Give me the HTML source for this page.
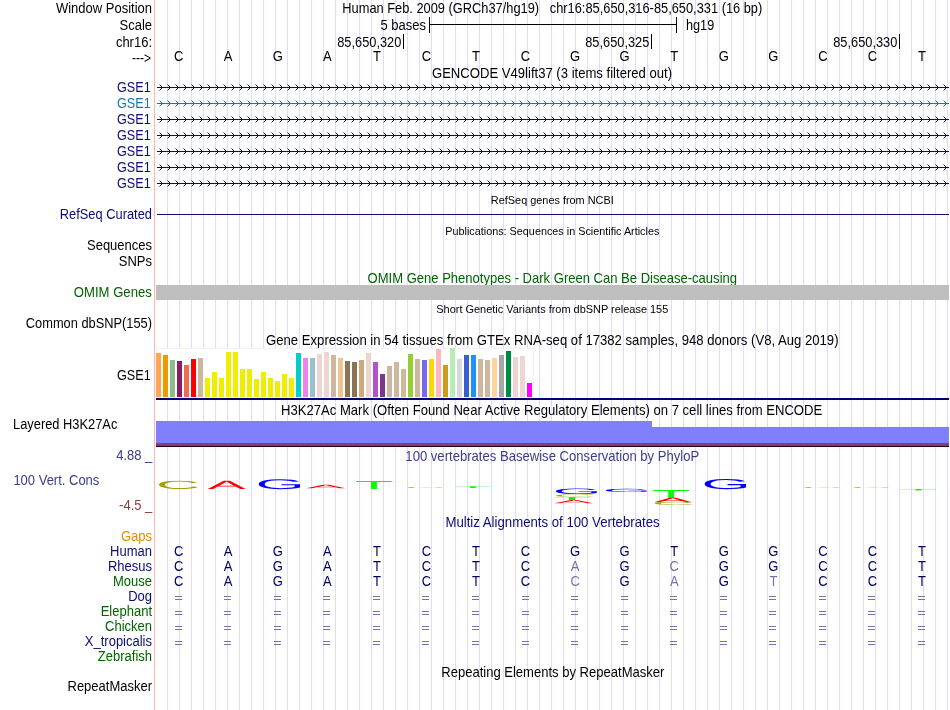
<!DOCTYPE html>
<html><head><meta charset="utf-8"><title>UCSC Genome Browser</title>
<style>
html,body{margin:0;padding:0;background:#fff;}
body{width:950px;height:710px;overflow:hidden;font-family:"Liberation Sans",sans-serif;}
svg{display:block;position:absolute;left:0;top:0;will-change:transform;}
svg text{font-family:"Liberation Sans",sans-serif;}
</style></head><body>
<svg width="950" height="710" viewBox="0 0 950 710">
<rect width="950" height="710" fill="#fff"/>
<path d="M167.5 0V710 M179.5 0V710 M191.5 0V710 M203.5 0V710 M215.5 0V710 M227.5 0V710 M239.5 0V710 M251.5 0V710 M263.5 0V710 M275.5 0V710 M287.5 0V710 M299.5 0V710 M311.5 0V710 M323.5 0V710 M335.5 0V710 M347.5 0V710 M359.5 0V710 M371.5 0V710 M383.5 0V710 M395.5 0V710 M407.5 0V710 M419.5 0V710 M431.5 0V710 M443.5 0V710 M455.5 0V710 M467.5 0V710 M479.5 0V710 M491.5 0V710 M503.5 0V710 M515.5 0V710 M527.5 0V710 M539.5 0V710 M551.5 0V710 M563.5 0V710 M575.5 0V710 M587.5 0V710 M599.5 0V710 M611.5 0V710 M623.5 0V710 M635.5 0V710 M647.5 0V710 M659.5 0V710 M671.5 0V710 M683.5 0V710 M695.5 0V710 M707.5 0V710 M719.5 0V710 M731.5 0V710 M743.5 0V710 M755.5 0V710 M767.5 0V710 M779.5 0V710 M791.5 0V710 M803.5 0V710 M815.5 0V710 M827.5 0V710 M839.5 0V710 M851.5 0V710 M863.5 0V710 M875.5 0V710 M887.5 0V710 M899.5 0V710 M911.5 0V710 M923.5 0V710 M935.5 0V710 M947.5 0V710" stroke="#dcdcff" stroke-width="1" fill="none"/>
<rect x="154" y="0" width="1" height="710" fill="#ffb4b4"/>
<text transform="translate(152,12.6) scale(1.0,1.07)" font-size="13" text-anchor="end" fill="#000" >Window Position</text>
<text transform="translate(552.3,12.6) scale(0.987,1.07)" font-size="13" text-anchor="middle" fill="#000" >Human Feb. 2009 (GRCh37/hg19)&#160;&#160;&#160;chr16:85,650,316-85,650,331 (16 bp)</text>
<text transform="translate(152,29.6) scale(1.0,1.07)" font-size="13" text-anchor="end" fill="#000" >Scale</text>
<text transform="translate(426,29.6) scale(1.0,1.07)" font-size="13" text-anchor="end" fill="#000" >5 bases</text>
<path d="M429.5 17V33M676.5 17V33M429 24.5H677" stroke="#000" stroke-width="1" fill="none"/>
<text transform="translate(686,29.6) scale(0.975,1.07)" font-size="13" text-anchor="start" fill="#000" >hg19</text>
<text transform="translate(152,46.6) scale(1.0,1.07)" font-size="13" text-anchor="end" fill="#000" >chr16:</text>
<text transform="translate(401.3,46.6) scale(0.985,1.07)" font-size="13" text-anchor="end" fill="#000" >85,650,320</text>
<rect x="403" y="34" width="1" height="15" fill="#000"/>
<text transform="translate(649.3,46.6) scale(0.985,1.07)" font-size="13" text-anchor="end" fill="#000" >85,650,325</text>
<rect x="651" y="34" width="1" height="15" fill="#000"/>
<text transform="translate(897.3,46.6) scale(0.985,1.07)" font-size="13" text-anchor="end" fill="#000" >85,650,330</text>
<rect x="899" y="34" width="1" height="15" fill="#000"/>
<text transform="translate(151,62.8) scale(0.93,1.07)" font-size="13" text-anchor="end" fill="#000" >---&gt;</text>
<text transform="translate(178.6,60.6) scale(1.0,1.07)" font-size="13" text-anchor="middle" fill="#000" >C</text>
<text transform="translate(228.16,60.6) scale(1.0,1.07)" font-size="13" text-anchor="middle" fill="#000" >A</text>
<text transform="translate(277.73,60.6) scale(1.0,1.07)" font-size="13" text-anchor="middle" fill="#000" >G</text>
<text transform="translate(327.29,60.6) scale(1.0,1.07)" font-size="13" text-anchor="middle" fill="#000" >A</text>
<text transform="translate(376.85,60.6) scale(1.0,1.07)" font-size="13" text-anchor="middle" fill="#000" >T</text>
<text transform="translate(426.41,60.6) scale(1.0,1.07)" font-size="13" text-anchor="middle" fill="#000" >C</text>
<text transform="translate(475.98,60.6) scale(1.0,1.07)" font-size="13" text-anchor="middle" fill="#000" >T</text>
<text transform="translate(525.54,60.6) scale(1.0,1.07)" font-size="13" text-anchor="middle" fill="#000" >C</text>
<text transform="translate(575.1,60.6) scale(1.0,1.07)" font-size="13" text-anchor="middle" fill="#000" >G</text>
<text transform="translate(624.66,60.6) scale(1.0,1.07)" font-size="13" text-anchor="middle" fill="#000" >G</text>
<text transform="translate(674.23,60.6) scale(1.0,1.07)" font-size="13" text-anchor="middle" fill="#000" >T</text>
<text transform="translate(723.79,60.6) scale(1.0,1.07)" font-size="13" text-anchor="middle" fill="#000" >G</text>
<text transform="translate(773.35,60.6) scale(1.0,1.07)" font-size="13" text-anchor="middle" fill="#000" >G</text>
<text transform="translate(822.91,60.6) scale(1.0,1.07)" font-size="13" text-anchor="middle" fill="#000" >C</text>
<text transform="translate(872.48,60.6) scale(1.0,1.07)" font-size="13" text-anchor="middle" fill="#000" >C</text>
<text transform="translate(922.04,60.6) scale(1.0,1.07)" font-size="13" text-anchor="middle" fill="#000" >T</text>
<text transform="translate(552.0,77.6) scale(1.008,1.07)" font-size="13" text-anchor="middle" fill="#000" >GENCODE V49lift37 (3 items filtered out)</text>
<defs><pattern id="cvn" patternUnits="userSpaceOnUse" x="154" y="84" width="8" height="16"><rect x="5" y="0" width="1" height="1" fill="#0c0c78" fill-opacity="0.45"/><rect x="6" y="1" width="1" height="1" fill="#0c0c78" fill-opacity="1"/><rect x="7" y="2" width="1" height="1" fill="#0c0c78" fill-opacity="1"/><rect x="7" y="4" width="1" height="1" fill="#0c0c78" fill-opacity="1"/><rect x="6" y="5" width="1" height="1" fill="#0c0c78" fill-opacity="1"/><rect x="5" y="6" width="1" height="1" fill="#0c0c78" fill-opacity="0.45"/></pattern></defs>
<defs><pattern id="cvt" patternUnits="userSpaceOnUse" x="154" y="84" width="8" height="16"><rect x="5" y="0" width="1" height="1" fill="#1878ac" fill-opacity="0.45"/><rect x="6" y="1" width="1" height="1" fill="#1878ac" fill-opacity="1"/><rect x="7" y="2" width="1" height="1" fill="#1878ac" fill-opacity="1"/><rect x="7" y="4" width="1" height="1" fill="#1878ac" fill-opacity="1"/><rect x="6" y="5" width="1" height="1" fill="#1878ac" fill-opacity="1"/><rect x="5" y="6" width="1" height="1" fill="#1878ac" fill-opacity="0.45"/></pattern></defs>
<text transform="translate(150.8,91.6) scale(0.975,1.07)" font-size="13" text-anchor="end" fill="#0c0c78" >GSE1</text>
<rect x="157" y="87" width="792" height="1" fill="#0c0c78"/>
<rect x="157" y="84" width="792" height="7" fill="url(#cvn)"/>
<text transform="translate(150.8,107.6) scale(0.975,1.07)" font-size="13" text-anchor="end" fill="#1878ac" >GSE1</text>
<rect x="157" y="103" width="792" height="1" fill="#1878ac"/>
<rect x="157" y="100" width="792" height="7" fill="url(#cvt)"/>
<text transform="translate(150.8,123.6) scale(0.975,1.07)" font-size="13" text-anchor="end" fill="#0c0c78" >GSE1</text>
<rect x="157" y="119" width="792" height="1" fill="#0c0c78"/>
<rect x="157" y="116" width="792" height="7" fill="url(#cvn)"/>
<text transform="translate(150.8,139.6) scale(0.975,1.07)" font-size="13" text-anchor="end" fill="#0c0c78" >GSE1</text>
<rect x="157" y="135" width="792" height="1" fill="#0c0c78"/>
<rect x="157" y="132" width="792" height="7" fill="url(#cvn)"/>
<text transform="translate(150.8,155.6) scale(0.975,1.07)" font-size="13" text-anchor="end" fill="#0c0c78" >GSE1</text>
<rect x="157" y="151" width="792" height="1" fill="#0c0c78"/>
<rect x="157" y="148" width="792" height="7" fill="url(#cvn)"/>
<text transform="translate(150.8,171.6) scale(0.975,1.07)" font-size="13" text-anchor="end" fill="#0c0c78" >GSE1</text>
<rect x="157" y="167" width="792" height="1" fill="#0c0c78"/>
<rect x="157" y="164" width="792" height="7" fill="url(#cvn)"/>
<text transform="translate(150.8,187.6) scale(0.975,1.07)" font-size="13" text-anchor="end" fill="#0c0c78" >GSE1</text>
<rect x="157" y="183" width="792" height="1" fill="#0c0c78"/>
<rect x="157" y="180" width="792" height="7" fill="url(#cvn)"/>
<text transform="translate(552.3,204.0) scale(0.992,1.07)" font-size="11" text-anchor="middle" fill="#000" >RefSeq genes from NCBI</text>
<text transform="translate(152,218.9) scale(0.99,1.07)" font-size="13" text-anchor="end" fill="#0c0c78" >RefSeq Curated</text>
<rect x="157" y="214" width="792" height="1" fill="#0c0c78"/>
<text transform="translate(552.3,235.0) scale(0.985,1.07)" font-size="11" text-anchor="middle" fill="#000" >Publications: Sequences in Scientific Articles</text>
<text transform="translate(152,249.6) scale(1.0,1.07)" font-size="13" text-anchor="end" fill="#000" >Sequences</text>
<text transform="translate(152,265.6) scale(1.0,1.07)" font-size="13" text-anchor="end" fill="#000" >SNPs</text>
<text transform="translate(552.3,282.6) scale(1.004,1.07)" font-size="13" text-anchor="middle" fill="#006400" >OMIM Gene Phenotypes - Dark Green Can Be Disease-causing</text>
<text transform="translate(151.8,296.6) scale(1.01,1.07)" font-size="13" text-anchor="end" fill="#006400" >OMIM Genes</text>
<rect x="156" y="285" width="793" height="15" fill="#bebebe"/>
<text transform="translate(552.3,313.0) scale(0.996,1.07)" font-size="11" text-anchor="middle" fill="#000" >Short Genetic Variants from dbSNP release 155</text>
<text transform="translate(152,327.6) scale(0.987,1.07)" font-size="13" text-anchor="end" fill="#000" >Common dbSNP(155)</text>
<text transform="translate(552.3,344.6) scale(1.01,1.07)" font-size="13" text-anchor="middle" fill="#000" >Gene Expression in 54 tissues from GTEx RNA-seq of 17382 samples, 948 donors (V8, Aug 2019)</text>
<text transform="translate(150.8,379.6) scale(0.975,1.07)" font-size="13" text-anchor="end" fill="#000" >GSE1</text>
<rect x="156" y="348" width="378" height="50" fill="#fff"/>
<rect x="156.5" y="348.5" width="377" height="49" fill="none" stroke="#f2f2f2"/>
<rect x="156" y="353" width="5" height="44" fill="#FFA54F"/>
<rect x="163" y="355" width="5" height="42" fill="#EE9A00"/>
<rect x="170" y="360" width="5" height="37" fill="#8FBC8F"/>
<rect x="177" y="361" width="5" height="36" fill="#8B1C62"/>
<rect x="184" y="365" width="5" height="32" fill="#EE6A50"/>
<rect x="191" y="359" width="5" height="38" fill="#FF0000"/>
<rect x="198" y="358" width="5" height="39" fill="#CDB79E"/>
<rect x="205" y="378" width="5" height="19" fill="#EEEE00"/>
<rect x="212" y="372" width="5" height="25" fill="#EEEE00"/>
<rect x="219" y="378" width="5" height="19" fill="#EEEE00"/>
<rect x="226" y="352" width="5" height="45" fill="#EEEE00"/>
<rect x="233" y="352" width="5" height="45" fill="#EEEE00"/>
<rect x="240" y="369" width="5" height="28" fill="#EEEE00"/>
<rect x="247" y="369" width="5" height="28" fill="#EEEE00"/>
<rect x="254" y="379" width="5" height="18" fill="#EEEE00"/>
<rect x="261" y="372" width="5" height="25" fill="#EEEE00"/>
<rect x="268" y="378" width="5" height="19" fill="#EEEE00"/>
<rect x="275" y="381" width="5" height="16" fill="#EEEE00"/>
<rect x="282" y="374" width="5" height="23" fill="#EEEE00"/>
<rect x="289" y="378" width="5" height="19" fill="#EEEE00"/>
<rect x="296" y="353" width="5" height="44" fill="#00CDCD"/>
<rect x="303" y="358" width="5" height="39" fill="#EE82EE"/>
<rect x="310" y="358" width="5" height="39" fill="#9AC0CD"/>
<rect x="317" y="354" width="5" height="43" fill="#EED5D2"/>
<rect x="324" y="352" width="5" height="45" fill="#EED5D2"/>
<rect x="331" y="355" width="5" height="42" fill="#CDB79E"/>
<rect x="338" y="358" width="5" height="39" fill="#EEC591"/>
<rect x="345" y="361" width="5" height="36" fill="#8B7355"/>
<rect x="352" y="362" width="5" height="35" fill="#8B7355"/>
<rect x="359" y="360" width="5" height="37" fill="#CDAA7D"/>
<rect x="366" y="353" width="5" height="44" fill="#EED5D2"/>
<rect x="373" y="362" width="5" height="35" fill="#B452CD"/>
<rect x="380" y="374" width="5" height="23" fill="#7A378B"/>
<rect x="387" y="366" width="5" height="31" fill="#CDB79E"/>
<rect x="394" y="362" width="5" height="35" fill="#CDB79E"/>
<rect x="401" y="369" width="5" height="28" fill="#CDB79E"/>
<rect x="408" y="354" width="5" height="43" fill="#9ACD32"/>
<rect x="415" y="359" width="5" height="38" fill="#CDB79E"/>
<rect x="422" y="360" width="5" height="37" fill="#7A67EE"/>
<rect x="429" y="359" width="5" height="38" fill="#FFD700"/>
<rect x="436" y="349" width="5" height="48" fill="#FFB6C1"/>
<rect x="443" y="365" width="5" height="32" fill="#CD9B1D"/>
<rect x="450" y="348" width="5" height="49" fill="#B4EEB4"/>
<rect x="457" y="359" width="5" height="38" fill="#D9D9D9"/>
<rect x="464" y="355" width="5" height="42" fill="#3A5FCD"/>
<rect x="471" y="355" width="5" height="42" fill="#1E90FF"/>
<rect x="478" y="359" width="5" height="38" fill="#CDB79E"/>
<rect x="485" y="360" width="5" height="37" fill="#CDB79E"/>
<rect x="492" y="358" width="5" height="39" fill="#FFD39B"/>
<rect x="499" y="355" width="5" height="42" fill="#A6A6A6"/>
<rect x="506" y="351" width="5" height="46" fill="#008B45"/>
<rect x="513" y="357" width="5" height="40" fill="#EED5D2"/>
<rect x="520" y="356" width="5" height="41" fill="#EED5D2"/>
<rect x="527" y="383" width="5" height="14" fill="#FF00FF"/>
<rect x="156" y="398" width="793" height="2" fill="#000070"/>
<text transform="translate(551.5999999999999,414.6) scale(1.0075,1.07)" font-size="13" text-anchor="middle" fill="#000" >H3K27Ac Mark (Often Found Near Active Regulatory Elements) on 7 cell lines from ENCODE</text>
<text transform="translate(13,428.6) scale(0.99,1.07)" font-size="13" text-anchor="start" fill="#000" >Layered H3K27Ac</text>
<path d="M156 421H652V427H949V443H156Z" fill="#8080ff"/>
<rect x="156" y="443" width="793" height="2" fill="#804080"/>
<rect x="156" y="445" width="793" height="1" fill="#8c3850"/>
<rect x="156" y="446" width="793" height="1" fill="#280018"/>
<text transform="translate(552.3,460.6) scale(1.0075,1.07)" font-size="13" text-anchor="middle" fill="#3c3c8c" >100 vertebrates Basewise Conservation by PhyloP</text>
<text transform="translate(152.3,459.6) scale(1.0,1.07)" font-size="13" text-anchor="end" fill="#3c3c8c" >4.88 _</text>
<text transform="translate(13.4,484.6) scale(1.0,1.07)" font-size="13" text-anchor="start" fill="#3c3c8c" >100 Vert. Cons</text>
<text transform="translate(152.3,509.7) scale(1.0,1.07)" font-size="13" text-anchor="end" fill="#8c3c3c" >-4.5 _</text>
<defs><path id="lgA" d="M1167 0 1006 412H364L202 0H4L579 1409H796L1362 0ZM685 1265 676 1237Q651 1154 602 1024L422 561H949L768 1026Q740 1095 712 1182Z"/><path id="lgC" d="M792 1274Q558 1274 428.0 1123.5Q298 973 298 711Q298 452 433.5 294.5Q569 137 800 137Q1096 137 1245 430L1401 352Q1314 170 1156.5 75.0Q999 -20 791 -20Q578 -20 422.5 68.5Q267 157 185.5 321.5Q104 486 104 711Q104 1048 286.0 1239.0Q468 1430 790 1430Q1015 1430 1166.0 1342.0Q1317 1254 1388 1081L1207 1021Q1158 1144 1049.5 1209.0Q941 1274 792 1274Z"/><path id="lgG" d="M103 711Q103 1054 287.0 1242.0Q471 1430 804 1430Q1038 1430 1184.0 1351.0Q1330 1272 1409 1098L1227 1044Q1167 1164 1061.5 1219.0Q956 1274 799 1274Q555 1274 426.0 1126.5Q297 979 297 711Q297 444 434.0 289.5Q571 135 813 135Q951 135 1070.5 177.0Q1190 219 1264 291V545H843V705H1440V219Q1328 105 1165.5 42.5Q1003 -20 813 -20Q592 -20 432.0 68.0Q272 156 187.5 321.5Q103 487 103 711Z"/><path id="lgT" d="M720 1253V0H530V1253H46V1409H1204V1253Z"/></defs>
<use href="#lgC" transform="matrix(0.03007,0,0,-0.00572,155.87,488.89)" fill="#a0a000" fill-opacity="1"/>
<use href="#lgA" transform="matrix(0.02791,0,0,-0.00589,207.59,489.00)" fill="#ff0000" fill-opacity="1"/>
<use href="#lgG" transform="matrix(0.03089,0,0,-0.00690,255.52,489.06)" fill="#0000ff" fill-opacity="1"/>
<use href="#lgA" transform="matrix(0.02872,0,0,-0.00256,306.19,488.30)" fill="#ff0000" fill-opacity="1"/>
<use href="#lgT" transform="matrix(0.03057,0,0,-0.00568,354.89,489.00)" fill="#00ff00" fill-opacity="1"/>
<use href="#lgC" transform="matrix(0.02830,0,0,-0.00069,404.36,487.89)" fill="#a0a000" fill-opacity="1"/>
<use href="#lgT" transform="matrix(0.03048,0,0,-0.00128,453.90,488.10)" fill="#00ff00" fill-opacity="1"/>
<use href="#lgG" transform="matrix(0.03067,0,0,-0.00379,552.64,493.92)" fill="#0000ff" fill-opacity="1"/>
<use href="#lgC" transform="matrix(0.02968,0,0,-0.00186,552.91,496.96)" fill="#a0a000" fill-opacity="1"/>
<use href="#lgT" transform="matrix(0.03109,0,0,-0.00213,552.57,500.00)" fill="#00ff00" fill-opacity="1"/>
<use href="#lgA" transform="matrix(0.02835,0,0,-0.00227,554.39,503.20)" fill="#ff0000" fill-opacity="1"/>
<use href="#lgG" transform="matrix(0.03067,0,0,-0.00221,602.64,491.96)" fill="#0000ff" fill-opacity="1"/>
<use href="#lgT" transform="matrix(0.03092,0,0,-0.00568,651.78,498.00)" fill="#00ff00" fill-opacity="1"/>
<use href="#lgA" transform="matrix(0.02791,0,0,-0.00312,653.69,502.20)" fill="#ff0000" fill-opacity="1"/>
<use href="#lgC" transform="matrix(0.02930,0,0,-0.00221,651.95,504.96)" fill="#a0a000" fill-opacity="1"/>
<use href="#lgG" transform="matrix(0.03096,0,0,-0.00703,701.41,489.06)" fill="#0000ff" fill-opacity="1"/>
<use href="#lgC" transform="matrix(0.02830,0,0,-0.00069,801.36,487.89)" fill="#a0a000" fill-opacity="1"/>
<use href="#lgC" transform="matrix(0.02814,0,0,-0.00069,850.57,487.89)" fill="#a0a000" fill-opacity="1"/>
<use href="#lgT" transform="matrix(0.03126,0,0,-0.00106,898.96,490.50)" fill="#00ff00" fill-opacity="1"/>
<text transform="translate(552.5,526.6) scale(1.017,1.07)" font-size="13" text-anchor="middle" fill="#0c0c78" >Multiz Alignments of 100 Vertebrates</text>
<text transform="translate(152,540.6) scale(1.0,1.07)" font-size="13" text-anchor="end" fill="#e88b00" >Gaps</text>
<text transform="translate(152,555.6) scale(1.0,1.07)" font-size="13" text-anchor="end" fill="#0c0c78" >Human</text>
<text transform="translate(178.6,555.6) scale(1.0,1.07)" font-size="13" text-anchor="middle" fill="#000064" >C</text>
<text transform="translate(228.16,555.6) scale(1.0,1.07)" font-size="13" text-anchor="middle" fill="#000064" >A</text>
<text transform="translate(277.73,555.6) scale(1.0,1.07)" font-size="13" text-anchor="middle" fill="#000064" >G</text>
<text transform="translate(327.29,555.6) scale(1.0,1.07)" font-size="13" text-anchor="middle" fill="#000064" >A</text>
<text transform="translate(376.85,555.6) scale(1.0,1.07)" font-size="13" text-anchor="middle" fill="#000064" >T</text>
<text transform="translate(426.41,555.6) scale(1.0,1.07)" font-size="13" text-anchor="middle" fill="#000064" >C</text>
<text transform="translate(475.98,555.6) scale(1.0,1.07)" font-size="13" text-anchor="middle" fill="#000064" >T</text>
<text transform="translate(525.54,555.6) scale(1.0,1.07)" font-size="13" text-anchor="middle" fill="#000064" >C</text>
<text transform="translate(575.1,555.6) scale(1.0,1.07)" font-size="13" text-anchor="middle" fill="#000064" >G</text>
<text transform="translate(624.66,555.6) scale(1.0,1.07)" font-size="13" text-anchor="middle" fill="#000064" >G</text>
<text transform="translate(674.23,555.6) scale(1.0,1.07)" font-size="13" text-anchor="middle" fill="#000064" >T</text>
<text transform="translate(723.79,555.6) scale(1.0,1.07)" font-size="13" text-anchor="middle" fill="#000064" >G</text>
<text transform="translate(773.35,555.6) scale(1.0,1.07)" font-size="13" text-anchor="middle" fill="#000064" >G</text>
<text transform="translate(822.91,555.6) scale(1.0,1.07)" font-size="13" text-anchor="middle" fill="#000064" >C</text>
<text transform="translate(872.48,555.6) scale(1.0,1.07)" font-size="13" text-anchor="middle" fill="#000064" >C</text>
<text transform="translate(922.04,555.6) scale(1.0,1.07)" font-size="13" text-anchor="middle" fill="#000064" >T</text>
<text transform="translate(152,570.6) scale(1.0,1.07)" font-size="13" text-anchor="end" fill="#0c0c78" >Rhesus</text>
<text transform="translate(178.6,570.6) scale(1.0,1.07)" font-size="13" text-anchor="middle" fill="#000064" >C</text>
<text transform="translate(228.16,570.6) scale(1.0,1.07)" font-size="13" text-anchor="middle" fill="#000064" >A</text>
<text transform="translate(277.73,570.6) scale(1.0,1.07)" font-size="13" text-anchor="middle" fill="#000064" >G</text>
<text transform="translate(327.29,570.6) scale(1.0,1.07)" font-size="13" text-anchor="middle" fill="#000064" >A</text>
<text transform="translate(376.85,570.6) scale(1.0,1.07)" font-size="13" text-anchor="middle" fill="#000064" >T</text>
<text transform="translate(426.41,570.6) scale(1.0,1.07)" font-size="13" text-anchor="middle" fill="#000064" >C</text>
<text transform="translate(475.98,570.6) scale(1.0,1.07)" font-size="13" text-anchor="middle" fill="#000064" >T</text>
<text transform="translate(525.54,570.6) scale(1.0,1.07)" font-size="13" text-anchor="middle" fill="#000064" >C</text>
<text transform="translate(575.1,570.6) scale(1.0,1.07)" font-size="13" text-anchor="middle" fill="#7474aa" >A</text>
<text transform="translate(624.66,570.6) scale(1.0,1.07)" font-size="13" text-anchor="middle" fill="#000064" >G</text>
<text transform="translate(674.23,570.6) scale(1.0,1.07)" font-size="13" text-anchor="middle" fill="#7474aa" >C</text>
<text transform="translate(723.79,570.6) scale(1.0,1.07)" font-size="13" text-anchor="middle" fill="#000064" >G</text>
<text transform="translate(773.35,570.6) scale(1.0,1.07)" font-size="13" text-anchor="middle" fill="#000064" >G</text>
<text transform="translate(822.91,570.6) scale(1.0,1.07)" font-size="13" text-anchor="middle" fill="#000064" >C</text>
<text transform="translate(872.48,570.6) scale(1.0,1.07)" font-size="13" text-anchor="middle" fill="#000064" >C</text>
<text transform="translate(922.04,570.6) scale(1.0,1.07)" font-size="13" text-anchor="middle" fill="#000064" >T</text>
<text transform="translate(152,585.6) scale(1.0,1.07)" font-size="13" text-anchor="end" fill="#006400" >Mouse</text>
<text transform="translate(178.6,585.6) scale(1.0,1.07)" font-size="13" text-anchor="middle" fill="#000064" >C</text>
<text transform="translate(228.16,585.6) scale(1.0,1.07)" font-size="13" text-anchor="middle" fill="#000064" >A</text>
<text transform="translate(277.73,585.6) scale(1.0,1.07)" font-size="13" text-anchor="middle" fill="#000064" >G</text>
<text transform="translate(327.29,585.6) scale(1.0,1.07)" font-size="13" text-anchor="middle" fill="#000064" >A</text>
<text transform="translate(376.85,585.6) scale(1.0,1.07)" font-size="13" text-anchor="middle" fill="#000064" >T</text>
<text transform="translate(426.41,585.6) scale(1.0,1.07)" font-size="13" text-anchor="middle" fill="#000064" >C</text>
<text transform="translate(475.98,585.6) scale(1.0,1.07)" font-size="13" text-anchor="middle" fill="#000064" >T</text>
<text transform="translate(525.54,585.6) scale(1.0,1.07)" font-size="13" text-anchor="middle" fill="#000064" >C</text>
<text transform="translate(575.1,585.6) scale(1.0,1.07)" font-size="13" text-anchor="middle" fill="#7474aa" >C</text>
<text transform="translate(624.66,585.6) scale(1.0,1.07)" font-size="13" text-anchor="middle" fill="#000064" >G</text>
<text transform="translate(674.23,585.6) scale(1.0,1.07)" font-size="13" text-anchor="middle" fill="#7474aa" >A</text>
<text transform="translate(723.79,585.6) scale(1.0,1.07)" font-size="13" text-anchor="middle" fill="#000064" >G</text>
<text transform="translate(773.35,585.6) scale(1.0,1.07)" font-size="13" text-anchor="middle" fill="#7474aa" >T</text>
<text transform="translate(822.91,585.6) scale(1.0,1.07)" font-size="13" text-anchor="middle" fill="#000064" >C</text>
<text transform="translate(872.48,585.6) scale(1.0,1.07)" font-size="13" text-anchor="middle" fill="#000064" >C</text>
<text transform="translate(922.04,585.6) scale(1.0,1.07)" font-size="13" text-anchor="middle" fill="#000064" >T</text>
<text transform="translate(152,600.6) scale(1.0,1.07)" font-size="13" text-anchor="end" fill="#0c0c78" >Dog</text>
<path d="M175 596h7v1h-7zM175 599h7v1h-7zM224 596h7v1h-7zM224 599h7v1h-7zM274 596h7v1h-7zM274 599h7v1h-7zM323 596h7v1h-7zM323 599h7v1h-7zM373 596h7v1h-7zM373 599h7v1h-7zM422 596h7v1h-7zM422 599h7v1h-7zM472 596h7v1h-7zM472 599h7v1h-7zM522 596h7v1h-7zM522 599h7v1h-7zM571 596h7v1h-7zM571 599h7v1h-7zM621 596h7v1h-7zM621 599h7v1h-7zM670 596h7v1h-7zM670 599h7v1h-7zM720 596h7v1h-7zM720 599h7v1h-7zM769 596h7v1h-7zM769 599h7v1h-7zM819 596h7v1h-7zM819 599h7v1h-7zM868 596h7v1h-7zM868 599h7v1h-7zM918 596h7v1h-7zM918 599h7v1h-7z" fill="#7474aa"/>
<text transform="translate(152,615.6) scale(1.0,1.07)" font-size="13" text-anchor="end" fill="#006400" >Elephant</text>
<path d="M175 611h7v1h-7zM175 614h7v1h-7zM224 611h7v1h-7zM224 614h7v1h-7zM274 611h7v1h-7zM274 614h7v1h-7zM323 611h7v1h-7zM323 614h7v1h-7zM373 611h7v1h-7zM373 614h7v1h-7zM422 611h7v1h-7zM422 614h7v1h-7zM472 611h7v1h-7zM472 614h7v1h-7zM522 611h7v1h-7zM522 614h7v1h-7zM571 611h7v1h-7zM571 614h7v1h-7zM621 611h7v1h-7zM621 614h7v1h-7zM670 611h7v1h-7zM670 614h7v1h-7zM720 611h7v1h-7zM720 614h7v1h-7zM769 611h7v1h-7zM769 614h7v1h-7zM819 611h7v1h-7zM819 614h7v1h-7zM868 611h7v1h-7zM868 614h7v1h-7zM918 611h7v1h-7zM918 614h7v1h-7z" fill="#7474aa"/>
<text transform="translate(152,630.6) scale(1.0,1.07)" font-size="13" text-anchor="end" fill="#006400" >Chicken</text>
<path d="M175 626h7v1h-7zM175 629h7v1h-7zM224 626h7v1h-7zM224 629h7v1h-7zM274 626h7v1h-7zM274 629h7v1h-7zM323 626h7v1h-7zM323 629h7v1h-7zM373 626h7v1h-7zM373 629h7v1h-7zM422 626h7v1h-7zM422 629h7v1h-7zM472 626h7v1h-7zM472 629h7v1h-7zM522 626h7v1h-7zM522 629h7v1h-7zM571 626h7v1h-7zM571 629h7v1h-7zM621 626h7v1h-7zM621 629h7v1h-7zM670 626h7v1h-7zM670 629h7v1h-7zM720 626h7v1h-7zM720 629h7v1h-7zM769 626h7v1h-7zM769 629h7v1h-7zM819 626h7v1h-7zM819 629h7v1h-7zM868 626h7v1h-7zM868 629h7v1h-7zM918 626h7v1h-7zM918 629h7v1h-7z" fill="#7474aa"/>
<text transform="translate(152,645.6) scale(1.0,1.07)" font-size="13" text-anchor="end" fill="#0c0c78" >X_tropicalis</text>
<path d="M175 641h7v1h-7zM175 644h7v1h-7zM224 641h7v1h-7zM224 644h7v1h-7zM274 641h7v1h-7zM274 644h7v1h-7zM323 641h7v1h-7zM323 644h7v1h-7zM373 641h7v1h-7zM373 644h7v1h-7zM422 641h7v1h-7zM422 644h7v1h-7zM472 641h7v1h-7zM472 644h7v1h-7zM522 641h7v1h-7zM522 644h7v1h-7zM571 641h7v1h-7zM571 644h7v1h-7zM621 641h7v1h-7zM621 644h7v1h-7zM670 641h7v1h-7zM670 644h7v1h-7zM720 641h7v1h-7zM720 644h7v1h-7zM769 641h7v1h-7zM769 644h7v1h-7zM819 641h7v1h-7zM819 644h7v1h-7zM868 641h7v1h-7zM868 644h7v1h-7zM918 641h7v1h-7zM918 644h7v1h-7z" fill="#7474aa"/>
<text transform="translate(152,660.6) scale(1.0,1.07)" font-size="13" text-anchor="end" fill="#006400" >Zebrafish</text>
<text transform="translate(552.8,676.6) scale(1.004,1.07)" font-size="13" text-anchor="middle" fill="#000" >Repeating Elements by RepeatMasker</text>
<text transform="translate(152,690.6) scale(1.0,1.07)" font-size="13" text-anchor="end" fill="#000" >RepeatMasker</text>
</svg>
</body></html>
